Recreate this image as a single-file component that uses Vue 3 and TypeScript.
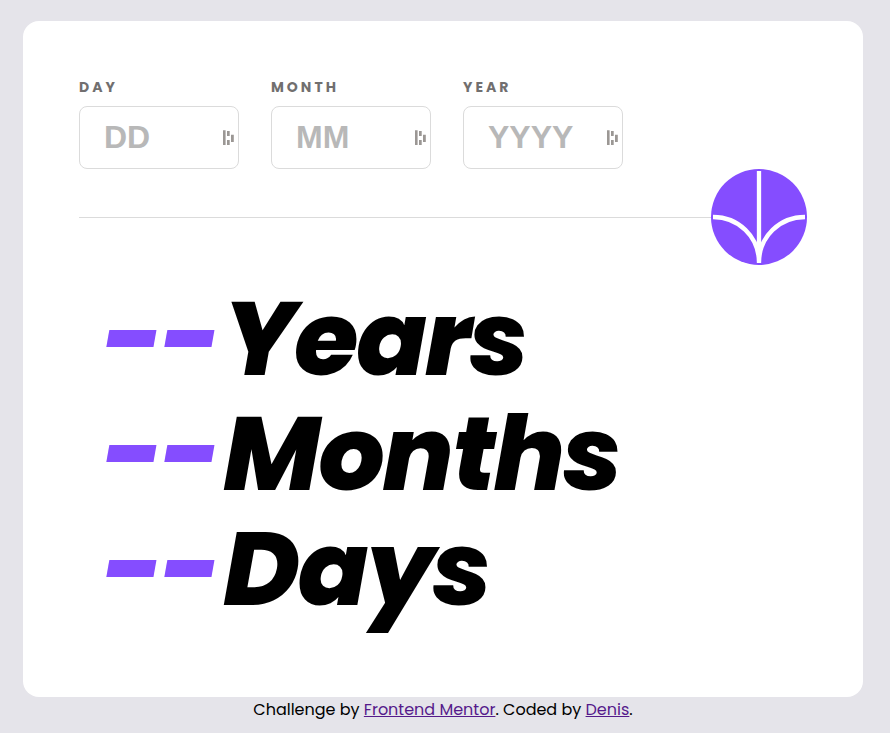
<script setup lang="ts">
interface Field {
  id: string
  label: string
  placeholder: string
}

const fields: Field[] = [
  { id: 'day', label: 'DAY', placeholder: 'DD' },
  { id: 'month', label: 'MONTH', placeholder: 'MM' },
  { id: 'year', label: 'YEAR', placeholder: 'YYYY' },
]
const units: string[] = ['Years', 'Months', 'Days']
</script>

<template>
  <div class="page">
    <main class="card">
      <form class="form" @submit.prevent>
        <div class="fields">
          <div v-for="field in fields" :key="field.id" class="field">
            <label :for="field.id">{{ field.label }}</label>
            <div class="box">
              <input :id="field.id" type="text" inputmode="numeric" :placeholder="field.placeholder" />
              <svg class="mark" viewBox="0 0 12 16" aria-hidden="true">
                <path d="M0 .3h2.6V15H0zM4 1h2.7v5H4zM4 10h2.7v5H4zM8 4.7h2.8v7.4H8z" fill="#9b9794" />
              </svg>
            </div>
          </div>
        </div>
        <div class="action">
          <span class="line"></span>
          <button type="submit" aria-label="Calculate age">
            <svg viewBox="0 0 96 96" aria-hidden="true">
              <g fill="none" stroke="#fff" stroke-width="4.3">
                <path d="M48 2V94M2 48C27 48 48 67 48 94M94 48C69 48 48 67 48 94" />
              </g>
            </svg>
          </button>
        </div>
      </form>
      <section class="results">
        <p v-for="unit in units" :key="unit"><span>--</span>{{ unit }}</p>
      </section>
    </main>
    <footer>
      Challenge by <a href="#">Frontend Mentor</a>. Coded by <a href="#">Denis</a>.
    </footer>
  </div>
</template>

<style>
body {
  background: #e5e4ea;
}
</style>

<style scoped>
.page {
  box-sizing: border-box;
  min-height: 100vh;
  padding: 21px 27px 0 23px;
  font-family: Poppins, "Open Sans", sans-serif;
}
.card {
  padding: 56px 56px 71px;
  border-radius: 16px;
  background: #fff;
}
.fields {
  display: flex;
  gap: 32px;
}
.field {
  width: 160px;
}
label {
  display: block;
  margin-bottom: 8px;
  color: #716f6f;
  font-size: 14px;
  font-weight: 700;
  line-height: 21px;
  letter-spacing: 3px;
}
.box {
  position: relative;
}
input {
  box-sizing: border-box;
  display: block;
  width: 100%;
  height: 63px;
  padding: 0 24px;
  border: 1px solid #dbdbdb;
  border-radius: 8px;
  background: #fff;
  font: 700 32px/40px "Liberation Sans", Arial, sans-serif;
}
input::placeholder {
  color: #b8b8b8;
}
.mark {
  position: absolute;
  top: 24px;
  right: 4px;
  width: 12px;
  height: 16px;
}
.action {
  display: flex;
  align-items: center;
}
.line {
  flex: 1;
  height: 1px;
  background: #dbdbdb;
}
button {
  width: 96px;
  height: 96px;
  padding: 0;
  border: 0;
  border-radius: 50%;
  background: #854dff;
}
button svg {
  display: block;
  width: 96px;
  height: 96px;
}
.results {
  padding: 16px 24px 0;
}
p {
  margin: 0;
  font-size: 104px;
  font-style: italic;
  font-weight: 800;
  line-height: 115px;
  letter-spacing: -2px;
}
p span {
  margin-right: 4px;
  color: #854dff;
}
footer {
  font-size: 16px;
  line-height: 26px;
  text-align: center;
}
a {
  color: #551a8b;
}
</style>
